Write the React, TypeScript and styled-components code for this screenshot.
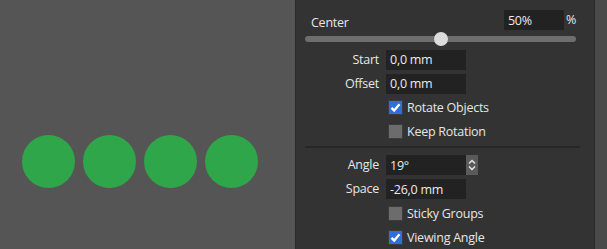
import styled, { createGlobalStyle } from "styled-components";

const GlobalStyle = createGlobalStyle`
  html, body {
    margin: 0;
    padding: 0;
    background: #555555;
    overflow: hidden;
  }
  body {
    font-family: "Open Sans", "Noto Sans", sans-serif;
    font-size: 12px;
    letter-spacing: -0.25px;
    color: #e6e6e6;
  }
`;

const Window = styled.div`
  display: flex;
  width: 607px;
  height: 249px;
  overflow: hidden;
`;

const Canvas = styled.div`
  width: 295px;
  flex-shrink: 0;
  background: #555555;
  display: flex;
  align-items: flex-start;
  gap: 8px;
  padding: 135px 0 0 22px;
  box-sizing: border-box;
`;

const Dot = styled.div`
  width: 53px;
  height: 53px;
  border-radius: 50%;
  background: #2fa64a;
  flex-shrink: 0;
`;

const Panel = styled.div`
  width: 298px;
  flex-shrink: 0;
  background: #333333;
  border-left: 1px solid #2a2a2a;
  border-right: 1px solid #2a2a2a;
  display: flex;
  flex-direction: column;
  padding-top: 10px;
`;

const ScrollStrip = styled.div`
  flex: 1;
  background: #4a4a4a;
`;

const CenterRow = styled.div`
  display: flex;
  align-items: flex-start;
  padding: 0 18px 0 15px;
  height: 20px;
`;

const CenterLabel = styled.span`
  flex: 1;
  padding-top: 4px;
  font-size: 12.5px;
`;

const Input = styled.div<{ $width?: number }>`
  width: ${({ $width }) => $width ?? 80}px;
  height: 20px;
  box-sizing: border-box;
  background: #222222;
  padding-left: 4px;
  display: flex;
  align-items: center;
  font-size: 12.5px;
  color: #eaeaea;
`;

const Unit = styled.span`
  margin-left: 2px;
  margin-top: 1px;
  font-size: 12.5px;
`;

const SliderTrack = styled.div`
  position: relative;
  margin: 6px 0 0 9px;
  width: 271px;
  height: 6px;
  border-radius: 3px;
  background: #6e6e6e;
`;

const SliderKnob = styled.div`
  position: absolute;
  top: -4px;
  width: 14px;
  height: 14px;
  margin-left: -7px;
  border-radius: 50%;
  background: #dcdcdc;
`;

const FieldRow = styled.div<{ $top?: number }>`
  display: grid;
  grid-template-columns: 83px auto auto;
  column-gap: 7px;
  justify-content: start;
  margin-top: ${({ $top }) => $top ?? 4}px;
  height: 20px;
`;

const FieldLabel = styled.span`
  text-align: right;
  line-height: 20px;
  font-size: 12.5px;
`;

const Spin = styled.div`
  width: 12px;
  height: 20px;
  margin-left: -7px;
  background: #5a5a5a;
  display: flex;
  align-items: center;
  justify-content: center;
`;

const CheckRow = styled.label<{ $top?: number }>`
  display: flex;
  align-items: center;
  gap: 4px;
  height: 24px;
  padding-left: 92px;
  margin-top: ${({ $top }) => $top ?? 0}px;
  font-size: 12.5px;
`;

const Box = styled.span<{ $checked: boolean }>`
  width: 15px;
  height: 15px;
  box-sizing: border-box;
  border: 1px solid #3c3c3c;
  background: ${({ $checked }) => ($checked ? "#2e6fd9" : "#6c6c6c")};
  display: flex;
  align-items: center;
  justify-content: center;
`;

const Separator = styled.div`
  margin: 3px 0 0 9px;
  width: 275px;
  height: 2px;
  background: #272727;
`;

function Check({ checked }: { checked: boolean }) {
  return (
    <Box $checked={checked}>
      {checked && (
        <svg width="11" height="11" viewBox="0 0 11 11">
          <path d="M1.5 5.8 L4.2 8.5 L9.5 2.2" fill="none" stroke="#ffffff" strokeWidth="2.4" />
        </svg>
      )}
    </Box>
  );
}

export default function App() {
  const center = 0.5;

  return (
    <Window>
      <GlobalStyle />
      <Canvas>
        {[0, 1, 2, 3].map((i) => (
          <Dot key={i} />
        ))}
      </Canvas>

      <Panel>
        <CenterRow>
          <CenterLabel>Center</CenterLabel>
          <Input $width={60}>50%</Input>
          <Unit>%</Unit>
        </CenterRow>
        <SliderTrack>
          <SliderKnob style={{ left: `${center * 100}%` }} />
        </SliderTrack>

        <FieldRow $top={8}>
          <FieldLabel>Start</FieldLabel>
          <Input>0,0 mm</Input>
        </FieldRow>
        <FieldRow>
          <FieldLabel>Offset</FieldLabel>
          <Input>0,0 mm</Input>
        </FieldRow>

        <CheckRow $top={2}>
          <Check checked />
          Rotate Objects
        </CheckRow>
        <CheckRow>
          <Check checked={false} />
          Keep Rotation
        </CheckRow>

        <Separator />

        <FieldRow $top={7}>
          <FieldLabel>Angle</FieldLabel>
          <Input>19°</Input>
          <Spin>
            <svg width="8" height="16" viewBox="0 0 8 16">
              <path d="M1 6.5 L4 3.5 L7 6.5 M1 9.5 L4 12.5 L7 9.5" fill="none" stroke="#e8e8e8" strokeWidth="1.4" />
            </svg>
          </Spin>
        </FieldRow>
        <FieldRow>
          <FieldLabel>Space</FieldLabel>
          <Input>-26,0 mm</Input>
        </FieldRow>

        <CheckRow $top={2}>
          <Check checked={false} />
          Sticky Groups
        </CheckRow>
        <CheckRow>
          <Check checked />
          Viewing Angle
        </CheckRow>
      </Panel>
      <ScrollStrip />
    </Window>
  );
}
